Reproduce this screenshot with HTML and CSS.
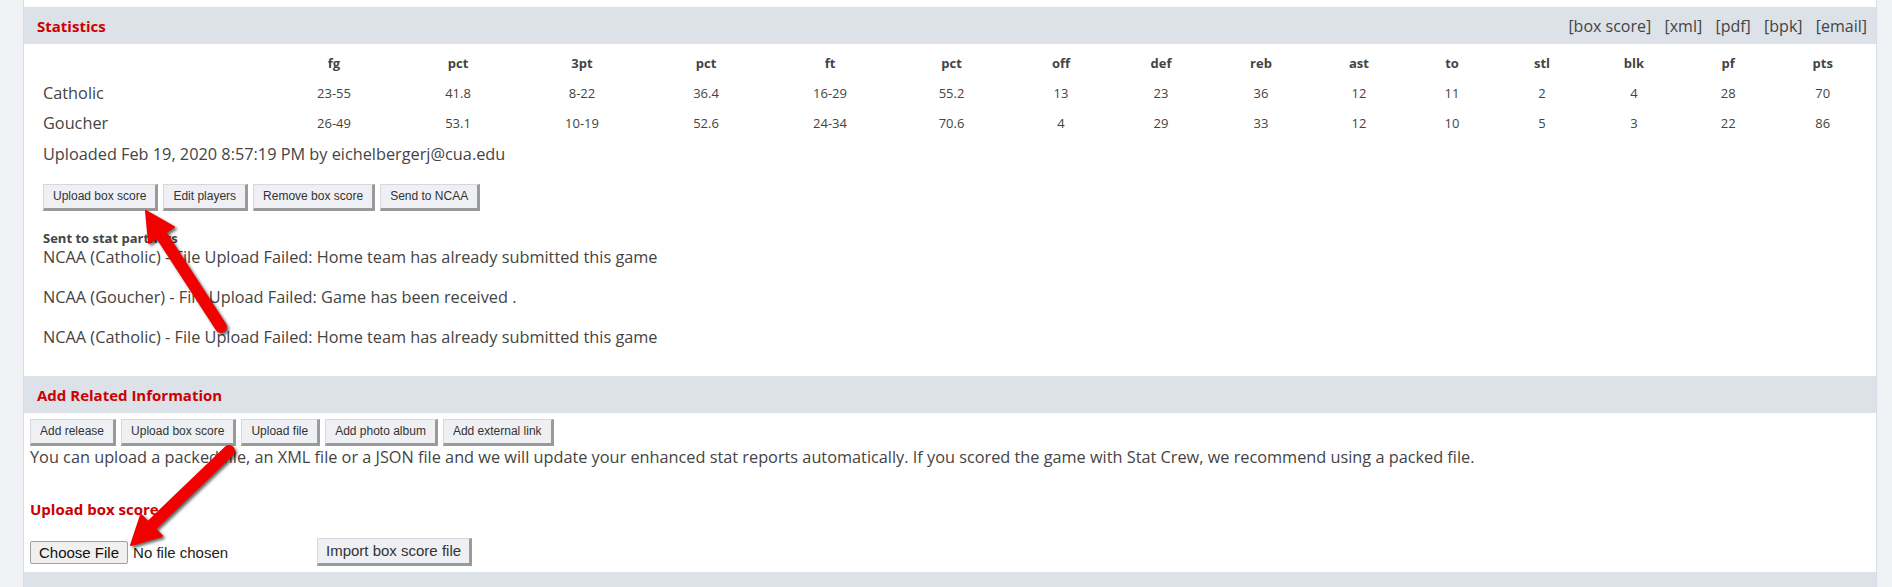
FILE: index.html
```html
<!DOCTYPE html>
<html lang="en">
<head>
  <meta charset="UTF-8">
  <title>Game Statistics</title>
  <link rel="stylesheet" href="styles.css">
</head>
<body>
  <div class="page">
    <section class="panel">
      <div class="panel-head">
        <h3>Statistics</h3>
        <div class="head-links">
          <a href="#">[box score]</a>
          <a href="#">[xml]</a>
          <a href="#">[pdf]</a>
          <a href="#">[bpk]</a>
          <a href="#">[email]</a>
        </div>
      </div>

      <div class="panel-body stats-body">
        <table class="stats">
          <colgroup>
            <col class="col-team">
            <col class="col-wide"><col class="col-wide"><col class="col-wide">
            <col class="col-wide"><col class="col-wide"><col class="col-pct">
            <col class="col-mid"><col class="col-mid"><col class="col-mid">
            <col class="col-ast"><col class="col-sm"><col class="col-sm">
            <col class="col-blk"><col><col>
          </colgroup>
          <thead>
            <tr>
              <th></th>
              <th>fg</th>
              <th>pct</th>
              <th>3pt</th>
              <th>pct</th>
              <th>ft</th>
              <th>pct</th>
              <th>off</th>
              <th>def</th>
              <th>reb</th>
              <th>ast</th>
              <th>to</th>
              <th>stl</th>
              <th>blk</th>
              <th>pf</th>
              <th>pts</th>
            </tr>
          </thead>
          <tbody>
            <tr>
              <td class="team">Catholic</td>
              <td>23-55</td><td>41.8</td><td>8-22</td><td>36.4</td><td>16-29</td><td>55.2</td>
              <td>13</td><td>23</td><td>36</td><td>12</td><td>11</td><td>2</td><td>4</td><td>28</td><td>70</td>
            </tr>
            <tr>
              <td class="team">Goucher</td>
              <td>26-49</td><td>53.1</td><td>10-19</td><td>52.6</td><td>24-34</td><td>70.6</td>
              <td>4</td><td>29</td><td>33</td><td>12</td><td>10</td><td>5</td><td>3</td><td>22</td><td>86</td>
            </tr>
          </tbody>
        </table>

        <p class="uploaded">Uploaded Feb 19, 2020 8:57:19 PM by eichelbergerj@cua.edu</p>

        <div class="btn-row">
          <button class="btn">Upload box score</button>
          <button class="btn">Edit players</button>
          <button class="btn">Remove box score</button>
          <button class="btn">Send to NCAA</button>
        </div>

        <div class="partners">
          <h4>Sent to stat partners</h4>
          <p>NCAA (Catholic) - File Upload Failed: Home team has already submitted this game</p>
          <p>NCAA (Goucher) - File Upload Failed: Game has been received .</p>
          <p>NCAA (Catholic) - File Upload Failed: Home team has already submitted this game</p>
        </div>
      </div>
    </section>

    <section class="panel">
      <div class="panel-head">
        <h3>Add Related Information</h3>
      </div>

      <div class="panel-body related-body">
        <div class="btn-row">
          <button class="btn">Add release</button>
          <button class="btn">Upload box score</button>
          <button class="btn">Upload file</button>
          <button class="btn">Add photo album</button>
          <button class="btn">Add external link</button>
        </div>

        <p class="note">You can upload a packed file, an XML file or a JSON file and we will update your enhanced stat reports automatically. If you scored the game with Stat Crew, we recommend using a packed file.</p>

        <h4 class="upload-title">Upload box score</h4>

        <form class="upload-row" onsubmit="return false">
          <input type="file" class="file-input">
          <button class="btn btn-big">Import box score file</button>
        </form>
      </div>
    </section>

    <section class="panel">
      <div class="panel-head"></div>
    </section>
  </div>

  <!-- annotation arrows drawn over the page -->
  <svg class="arrows" width="1892" height="587" viewBox="0 0 1892 587">
    <g fill="#f20000" stroke="#f20000">
      <line x1="221" y1="327" x2="160" y2="233" stroke-width="12" stroke-linecap="round"/>
      <polygon points="146,211 174,227 149,243" stroke-width="2" stroke-linejoin="round"/>
      <line x1="229" y1="451" x2="152" y2="525" stroke-width="12" stroke-linecap="round"/>
      <polygon points="131,545 162,536 141,515" stroke-width="2" stroke-linejoin="round"/>
    </g>
  </svg>
</body>
</html>
```

FILE: styles.css
```css
* {
  margin: 0;
  padding: 0;
  box-sizing: border-box;
}

body {
  font-family: 'Open Sans', 'Liberation Sans', sans-serif;
  background-color: #f1f2f6;
  color: #444;
  font-size: 16.3px;
  height: 587px;
  overflow: hidden;
  position: relative;
}

.page {
  margin: 0 15px 0 23px;
  padding-top: 7px;
  min-height: 587px;
  background: #fff;
  border-left: 1px solid #d9dce3;
  border-right: 1px solid #d9dce3;
}

.panel-head {
  height: 37px;
  background-color: #dde1e8;
  display: flex;
  align-items: center;
  justify-content: space-between;
  padding: 0 9px 0 13px;
}

.panel-head h3 {
  font-size: 15px;
  font-weight: bold;
  color: #cc0000;
}

.head-links a {
  color: #444;
  font-size: 16px;
  text-decoration: none;
  margin-left: 9px;
}

.stats-body {
  padding: 4px 6px 10px 19px;
}

.stats {
  width: 100%;
  table-layout: fixed;
  border-collapse: collapse;
}

.col-team { width: 229px; }
.col-wide { width: 124px; }
.col-pct { width: 119px; }
.col-mid { width: 100px; }
.col-ast { width: 96px; }
.col-sm { width: 90px; }
.col-blk { width: 94px; }

.stats th, .stats td {
  height: 30px;
  padding: 0;
  text-align: center;
  font-size: 13px;
  vertical-align: middle;
}

.stats th {
  font-weight: bold;
}

.stats .team {
  text-align: left;
  font-size: 16.3px;
}

.uploaded {
  margin-top: 5px;
  line-height: 22px;
}

.btn-row {
  display: flex;
  gap: 5px;
}

.stats-body .btn-row {
  margin-top: 19px;
}

.btn {
  height: 27px;
  font-family: 'Liberation Sans', Arial, sans-serif;
  font-size: 12px;
  line-height: 15px;
  color: #333;
  background-color: #eef0f4;
  padding: 4px 9px;
  border-style: solid;
  border-width: 1px 3px 3px 1px;
  border-color: #d6d8dc #9a9a9a #9a9a9a #d6d8dc;
  cursor: pointer;
}

.partners {
  margin-top: 19px;
}

.partners h4 {
  font-size: 13px;
  line-height: 16px;
  font-weight: bold;
  color: #444;
}

.partners p {
  line-height: 22px;
  margin-bottom: 18px;
}

.related-body {
  padding: 6px;
}

.note {
  line-height: 22px;
}

.upload-title {
  margin-top: 31px;
  font-size: 15px;
  line-height: 20px;
  color: #cc0000;
}

.upload-row {
  margin-top: 19px;
  display: flex;
  align-items: center;
  height: 28px;
}

.file-input {
  width: 287px;
  font-family: 'Liberation Sans', Arial, sans-serif;
  font-size: 15px;
  color: #222;
}

.file-input::file-selector-button {
  font-family: 'Liberation Sans', Arial, sans-serif;
  font-size: 15px;
  color: #111;
  background-color: #f0f0f0;
  border: 1px solid #a0a0a0;
  border-radius: 2px;
  padding: 2px 8px;
  margin-right: 5px;
}

.btn-big {
  height: 28px;
  font-size: 15px;
  line-height: 17px;
  padding: 3px 8px 4px;
}

.arrows {
  position: absolute;
  top: 0;
  left: 0;
  pointer-events: none;
  filter: drop-shadow(2px 2px 1.5px rgba(0, 0, 0, 0.6));
}
```
